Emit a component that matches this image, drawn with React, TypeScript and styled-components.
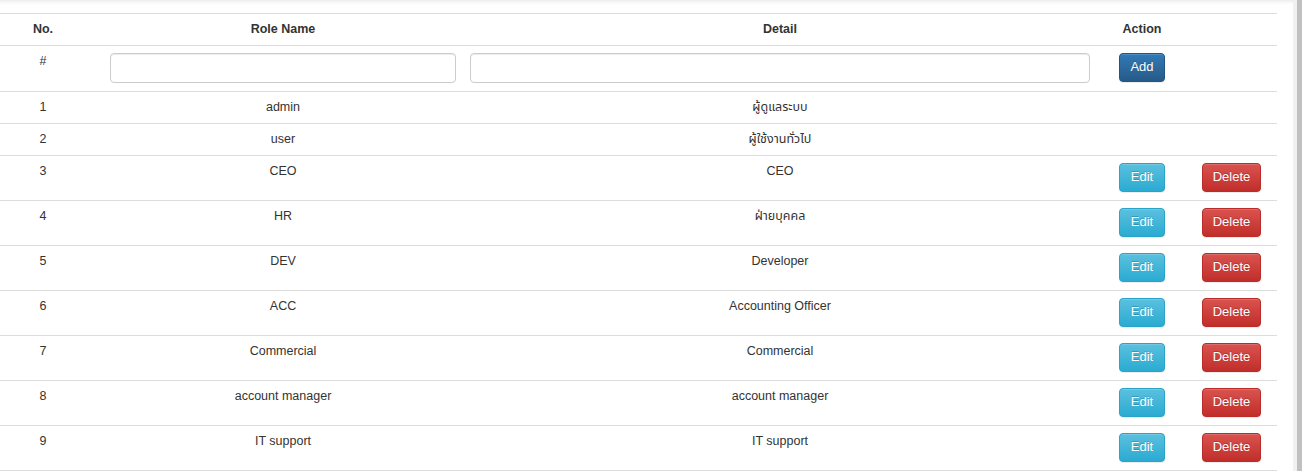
import React from "react";
import styled, { createGlobalStyle, css } from "styled-components";

const GlobalStyle = createGlobalStyle`
  html, body {
    margin: 0;
    padding: 0;
    background: #fff;
  }
  body {
    font-family: "Liberation Sans", Arial, "Noto Sans Thai", "Noto Sans", sans-serif;
    font-size: 12.5px;
    color: #333;
    overflow: hidden;
  }
`;

const Page = styled.div`
  display: flex;
  height: 471px;
  width: 1302px;
`;

const Main = styled.main`
  flex: 1;
  padding-top: 13px;
  background: linear-gradient(#ececec 0px, #f7f7f7 2px, #ffffff 5px) no-repeat;
  background-size: 100% 6px;
  background-color: #fff;
`;

const Track = styled.div`
  width: 9px;
  background: #f1f1f1;
  display: flex;
  justify-content: flex-end;
`;

const Thumb = styled.div`
  width: 5px;
  background: #c1c1c1;
`;

const Table = styled.table`
  width: 1277px;
  border-collapse: collapse;
  table-layout: fixed;
`;

type CellProps = { $col?: "no" | "detail" };

const cellBase = css<CellProps>`
  border-top: 1px solid #ddd;
  padding: 7px 8px 8px;
  line-height: 16px;
  vertical-align: top;
  text-align: center;
  ${(p) => p.$col === "no" && "padding-right: 24px;"}
  ${(p) => p.$col === "detail" && "padding-left: 6px;"}
`;

const Th = styled.th<CellProps>`
  ${cellBase};
  font-weight: bold;
`;

const Td = styled.td<CellProps>`
  ${cellBase};
`;

const Tr = styled.tr`
  &:last-child td {
    border-bottom: 1px solid #ddd;
  }
`;

const Input = styled.input`
  display: block;
  width: 100%;
  height: 30px;
  box-sizing: border-box;
  border: 1px solid #ccc;
  border-radius: 4px;
  box-shadow: inset 0 1px 1px rgba(0, 0, 0, 0.075);
  padding: 4px 8px;
  font: inherit;
  margin: 0;
`;

const variants = {
  primary: css`
    background-image: linear-gradient(to bottom, #337ab7 0%, #265a88 100%);
    border-color: #245580;
  `,
  info: css`
    background-image: linear-gradient(to bottom, #5bc0de 0%, #2aabd2 100%);
    border-color: #28a4c9;
  `,
  danger: css`
    background-image: linear-gradient(to bottom, #d9534f 0%, #c12e2a 100%);
    border-color: #b92c28;
  `,
};

const Button = styled.button<{ $variant: keyof typeof variants }>`
  display: block;
  margin: 0 auto;
  box-sizing: border-box;
  height: 29px;
  min-width: 46px;
  padding: 0 10px 2px;
  border: 1px solid transparent;
  border-radius: 4px;
  font-family: "Liberation Sans", Arial, sans-serif;
  font-size: 13px;
  line-height: 23px;
  color: #fff;
  text-shadow: 0 -1px 0 rgba(0, 0, 0, 0.2);
  box-shadow: inset 0 1px 0 rgba(255, 255, 255, 0.15), 0 1px 1px rgba(0, 0, 0, 0.075);
  cursor: pointer;
  ${(p) => variants[p.$variant]}
`;

type Role = { id: number; name: string; detail: string; editable: boolean };

const roles: Role[] = [
  { id: 1, name: "admin", detail: "ผู้ดูแลระบบ", editable: false },
  { id: 2, name: "user", detail: "ผู้ใช้งานทั่วไป", editable: false },
  { id: 3, name: "CEO", detail: "CEO", editable: true },
  { id: 4, name: "HR", detail: "ฝ่ายบุคคล", editable: true },
  { id: 5, name: "DEV", detail: "Developer", editable: true },
  { id: 6, name: "ACC", detail: "Accounting Officer", editable: true },
  { id: 7, name: "Commercial", detail: "Commercial", editable: true },
  { id: 8, name: "account manager", detail: "account manager", editable: true },
  { id: 9, name: "IT support", detail: "IT support", editable: true },
];

export default function App() {
  return (
    <>
      <GlobalStyle />
      <Page>
        <Main>
          <Table>
            <colgroup>
              <col style={{ width: 102 }} />
              <col style={{ width: 362 }} />
              <col style={{ width: 634 }} />
              <col style={{ width: 88 }} />
              <col style={{ width: 91 }} />
            </colgroup>
            <thead>
              <tr>
                <Th $col="no">No.</Th>
                <Th>Role Name</Th>
                <Th $col="detail">Detail</Th>
                <Th>Action</Th>
                <Th />
              </tr>
            </thead>
            <tbody>
              <Tr>
                <Td $col="no">#</Td>
                <Td>
                  <Input type="text" />
                </Td>
                <Td $col="detail">
                  <Input type="text" />
                </Td>
                <Td>
                  <Button $variant="primary">Add</Button>
                </Td>
                <Td />
              </Tr>
              {roles.map((r) => (
                <Tr key={r.id}>
                  <Td $col="no">{r.id}</Td>
                  <Td>{r.name}</Td>
                  <Td $col="detail">{r.detail}</Td>
                  <Td>{r.editable && <Button $variant="info">Edit</Button>}</Td>
                  <Td>{r.editable && <Button $variant="danger">Delete</Button>}</Td>
                </Tr>
              ))}
            </tbody>
          </Table>
        </Main>
        <Track>
          <Thumb />
        </Track>
      </Page>
    </>
  );
}
